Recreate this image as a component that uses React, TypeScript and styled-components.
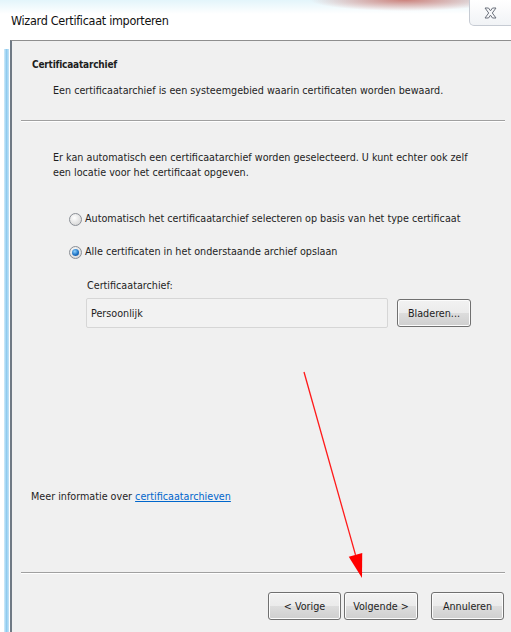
import React from 'react';
import styled, { createGlobalStyle } from 'styled-components';

const GlobalStyle = createGlobalStyle`
  html, body {
    margin: 0;
    padding: 0;
    background: #ffffff;
  }
  body {
    font-family: 'DejaVu Sans Condensed', 'Liberation Sans', sans-serif;
    font-size: 10.7px;
    color: #1e1e1e;
  }
`;

const Window = styled.div`
  position: relative;
  width: 511px;
  height: 632px;
  display: flex;
  flex-direction: column;
  overflow: hidden;
  background: #ffffff;
`;

const TitleBar = styled.div`
  height: 40px;
  display: flex;
  justify-content: space-between;
  align-items: flex-start;
  background:
    radial-gradient(ellipse 95px 11px at 405px 0, rgba(196, 92, 82, 0.75), rgba(196, 92, 82, 0) 100%),
    linear-gradient(to bottom, #e3f5fb 0, #ffffff 14px);
`;

const Title = styled.div`
  padding: 12px 0 0 11px;
  font-size: 12.5px;
  letter-spacing: -0.3px;
  line-height: 18px;
  color: #111;
`;

const CloseButton = styled.div`
  width: 44px;
  height: 26px;
  margin-right: -2px;
  display: flex;
  align-items: center;
  justify-content: center;
  border: 1px solid #c6cbd3;
  border-top: none;
  border-radius: 0 0 0 5px;
  background: linear-gradient(to bottom, #ffffff, #f1f3f6);
  box-sizing: border-box;
  padding-right: 2px;
`;

const Body = styled.div`
  flex: 1;
  display: flex;
  min-height: 0;
`;

const Rail = styled.div`
  width: 10px;
  padding: 8px 1px 0 4px;
  box-sizing: border-box;
  background: #ffffff;
  border-top: 1px solid #ffffff;
`;

const RailGlow = styled.div`
  height: 100%;
  background: linear-gradient(to right, #d2ecfa, #8fcbef 50%, #c4e4f7);
`;

const Frame = styled.div`
  flex: 1;
  display: flex;
  flex-direction: column;
  background: #f0f0f0;
  border-top: 1px solid #8e8e8e;
  border-left: 2px solid #6f7984;
`;

const Header = styled.div`
  padding: 16px 0 0 20px;
`;

const HeaderTitle = styled.div`
  font-size: 10px;
  font-weight: bold;
  letter-spacing: -0.2px;
  line-height: 16px;
`;

const HeaderText = styled.div`
  margin: 10px 0 0 21px;
  line-height: 16px;
`;

const Separator = styled.div<{ top: number }>`
  margin: ${({ top }) => top}px 6px 0 9px;
  height: 1px;
  background: #a0a0a0;
  border-bottom: 1px solid #ffffff;
`;

const Content = styled.div`
  padding: 28px 0 0 41px;
  display: flex;
  flex-direction: column;
`;

const Paragraph = styled.p`
  margin: 0;
  line-height: 15px;
  width: 422px;
`;

const RadioRow = styled.label<{ gap: number }>`
  margin: ${({ gap }) => gap}px 0 0 16px;
  display: flex;
  align-items: center;
  gap: 3px;
  line-height: 16px;
  white-space: nowrap;
`;

const RadioDot = styled.span<{ checked?: boolean }>`
  width: 13px;
  height: 13px;
  border-radius: 50%;
  box-sizing: border-box;
  border: 1px solid #8b8f96;
  background: radial-gradient(circle at 40% 35%, #ffffff, #dcdcdc 70%, #c8c8c8);
  display: flex;
  align-items: center;
  justify-content: center;

  &::after {
    content: '';
    display: ${({ checked }) => (checked ? 'block' : 'none')};
    width: 7px;
    height: 7px;
    border-radius: 50%;
    background: radial-gradient(circle at 40% 35%, #8fd2ff, #1e73c4 55%, #0b3f86);
  }
`;

const FieldLabel = styled.div`
  margin: 18px 0 0 34px;
  line-height: 16px;
`;

const FieldRow = styled.div`
  margin: 4px 0 0 33px;
  display: flex;
  align-items: center;
  gap: 9px;
`;

const StoreInput = styled.div`
  width: 302px;
  height: 30px;
  box-sizing: border-box;
  border: 1px solid #d6d6d6;
  border-radius: 2px;
  background: #f2f2f2;
  padding: 0 4px;
  display: flex;
  align-items: center;
`;

const PushButton = styled.button<{ width: number }>`
  width: ${({ width }) => width}px;
  height: 28px;
  padding: 0;
  border: 1px solid #707070;
  border-radius: 3px;
  box-shadow: inset 0 0 0 1px #fcfcfc;
  background: linear-gradient(to bottom, #f2f2f2 0, #ebebeb 50%, #dddddd 50%, #cfcfcf 100%);
  font-family: inherit;
  font-size: 10.7px;
  color: #1e1e1e;
`;

const Spacer = styled.div`
  flex: 1;
`;

const MoreInfo = styled.div`
  padding-left: 19px;
  line-height: 16px;
`;

const Link = styled.a`
  color: #0066cc;
  text-decoration: underline;
`;

const Footer = styled.div`
  margin-top: 18px;
  padding: 0 7px 12px 0;
  display: flex;
  justify-content: flex-end;
  gap: 3px;
`;

const CancelGap = styled.span`
  width: 7px;
`;

const Annotation = styled.svg`
  position: absolute;
  left: 0;
  top: 0;
  pointer-events: none;
`;

function CloseGlyph() {
  return (
    <svg width="13" height="12" viewBox="0 0 13 12">
      <polygon
        points="1,1 4.5,1 6.5,3.8 8.5,1 12,1 8.3,6 12,11 8.5,11 6.5,8.2 4.5,11 1,11 4.7,6"
        fill="#f7f8fa"
        stroke="#6b717c"
        strokeWidth="1"
        strokeLinejoin="round"
      />
    </svg>
  );
}

function RedArrow() {
  // shaft from (304,372) down to the tip at (362,578)
  const x1 = 304;
  const y1 = 372;
  const x2 = 362;
  const y2 = 578;
  const len = Math.hypot(x2 - x1, y2 - y1);
  const ux = (x2 - x1) / len;
  const uy = (y2 - y1) / len;
  const headLen = 24;
  const headHalf = 7;
  const bx = x2 - ux * headLen;
  const by = y2 - uy * headLen;
  const head = `${x2},${y2} ${bx - uy * headHalf},${by + ux * headHalf} ${bx + uy * headHalf},${by - ux * headHalf}`;
  return (
    <Annotation width="511" height="632" viewBox="0 0 511 632">
      <line x1={x1} y1={y1} x2={bx} y2={by} stroke="#ff1a1a" strokeWidth="1.3" />
      <polygon points={head} fill="#ff0000" />
    </Annotation>
  );
}

export default function App() {
  return (
    <Window>
      <GlobalStyle />
      <TitleBar>
        <Title>Wizard Certificaat importeren</Title>
        <CloseButton>
          <CloseGlyph />
        </CloseButton>
      </TitleBar>
      <Body>
        <Rail>
          <RailGlow />
        </Rail>
        <Frame>
          <Header>
            <HeaderTitle>Certificaatarchief</HeaderTitle>
            <HeaderText>Een certificaatarchief is een systeemgebied waarin certificaten worden bewaard.</HeaderText>
          </Header>
          <Separator top={21} />
          <Content>
            <Paragraph>
              Er kan automatisch een certificaatarchief worden geselecteerd. U kunt echter ook zelf een locatie
              voor het certificaat opgeven.
            </Paragraph>
            <RadioRow gap={31}>
              <RadioDot />
              Automatisch het certificaatarchief selecteren op basis van het type certificaat
            </RadioRow>
            <RadioRow gap={17}>
              <RadioDot checked />
              Alle certificaten in het onderstaande archief opslaan
            </RadioRow>
            <FieldLabel>Certificaatarchief:</FieldLabel>
            <FieldRow>
              <StoreInput>Persoonlijk</StoreInput>
              <PushButton width={74}>Bladeren...</PushButton>
            </FieldRow>
          </Content>
          <Spacer />
          <MoreInfo>
            Meer informatie over <Link href="#">certificaatarchieven</Link>
          </MoreInfo>
          <Separator top={67} />
          <Footer>
            <PushButton width={73}>&lt; Vorige</PushButton>
            <PushButton width={74}>Volgende &gt;</PushButton>
            <CancelGap />
            <PushButton width={73}>Annuleren</PushButton>
          </Footer>
        </Frame>
      </Body>
      <RedArrow />
    </Window>
  );
}
